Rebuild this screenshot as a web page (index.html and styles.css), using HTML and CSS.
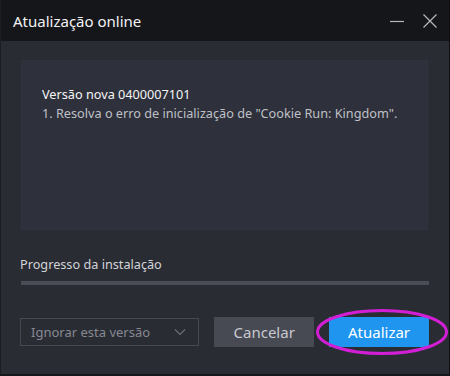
FILE: index.html
```html
<!DOCTYPE html>
<html lang="pt">
<head>
    <meta charset="UTF-8">
    <title>Atualização online</title>
    <link rel="stylesheet" href="styles.css">
</head>
<body>

<div class="window">
    <div class="titlebar">
        <span class="title">Atualização online</span>
        <div class="controls">
            <button class="ctl" aria-label="Minimizar">
                <svg width="16" height="16" viewBox="0 0 16 16"><path d="M1 8.5h14" stroke="#b8b9bf" stroke-width="1.2"/></svg>
            </button>
            <button class="ctl" aria-label="Fechar">
                <svg width="16" height="16" viewBox="0 0 16 16"><path d="M1.5 1.5l13 13M14.5 1.5l-13 13" stroke="#b8b9bf" stroke-width="1.2"/></svg>
            </button>
        </div>
    </div>

    <div class="content">
        <div class="notes">
            <p class="version">Versão nova 0400007101</p>
            <p class="item">1. Resolva o erro de inicialização de "Cookie Run: Kingdom".</p>
        </div>

        <p class="progress-label">Progresso da instalação</p>
        <div class="progress"><div class="progress-fill"></div></div>

        <div class="actions">
            <div class="select">
                <span>Ignorar esta versão</span>
                <svg width="12" height="8" viewBox="0 0 12 8"><path d="M1 1.5l5 5 5-5" fill="none" stroke="#6c6e78" stroke-width="1.2"/></svg>
            </div>
            <button class="btn cancel">Cancelar</button>
            <div class="update-wrap">
                <button class="btn update">Atualizar</button>
                <svg class="ring" width="134" height="48" viewBox="0 0 134 48"><ellipse cx="67" cy="24" rx="64.5" ry="21.5" fill="none" stroke="#d21fd6" stroke-width="3"/></svg>
            </div>
        </div>
    </div>
</div>

</body>
</html>
```

FILE: styles.css
```css
body {
    margin: 0;
    background: #111216;
    font-family: "Noto Sans", "Open Sans", sans-serif;
}

.window {
    width: 448px;
    height: 374px;
    border-left: 1px solid #1c1d22;
    border-right: 1px solid #0e0f12;
    border-bottom: 2px solid #17181c;
    background: #2a2c34;
    display: flex;
    flex-direction: column;
}

.titlebar {
    height: 41px;
    background: #15161a;
    display: flex;
    align-items: center;
    justify-content: space-between;
    padding: 0 11px 0 12px;
}

.title {
    color: #f2f2f4;
    font-size: 15px;
}

.controls {
    display: flex;
    gap: 17px;
}

.ctl {
    background: none;
    border: none;
    padding: 0;
    width: 16px;
    height: 16px;
    display: flex;
    cursor: pointer;
}

.content {
    flex: 1;
    padding: 19px 20px 0 19px;
}

.notes {
    box-sizing: border-box;
    height: 170px;
    margin-left: 1px;
    margin-right: 1px;
    background: #2e303b;
    border: 1px solid #30323d;
    padding: 24px 20px 0;
}

.notes p {
    margin: 0;
    font-size: 12.7px;
    line-height: 19px;
}

.version {
    color: #f4f4f6;
}

.item {
    color: #bfc0c6;
}

.progress-label {
    margin: 24px 0 0;
    color: #d2d3d8;
    font-size: 12.7px;
    line-height: 20px;
}

.progress {
    margin: 7px 0 0 1px;
    height: 4px;
    background: #4a4c58;
}

.progress-fill {
    width: 0;
    height: 100%;
    background: #2196f3;
}

.actions {
    margin-top: 32px;
    display: flex;
    align-items: center;
}

.select {
    box-sizing: border-box;
    width: 180px;
    height: 28px;
    border: 1px solid #454751;
    display: flex;
    align-items: center;
    justify-content: space-between;
    padding: 0 12px 0 10px;
    color: #868892;
    font-size: 13px;
}

.btn {
    height: 30px;
    width: 100px;
    border: none;
    font-family: inherit;
    font-size: 15px;
    cursor: pointer;
}

.cancel {
    margin-left: 15px;
    background: #474953;
    color: #c9cad0;
}

.update-wrap {
    position: relative;
    margin-left: 15px;
}

.update {
    display: block;
    background: #1f95ef;
    color: #fff;
}

.ring {
    position: absolute;
    left: -14px;
    top: -9px;
    pointer-events: none;
}
```
